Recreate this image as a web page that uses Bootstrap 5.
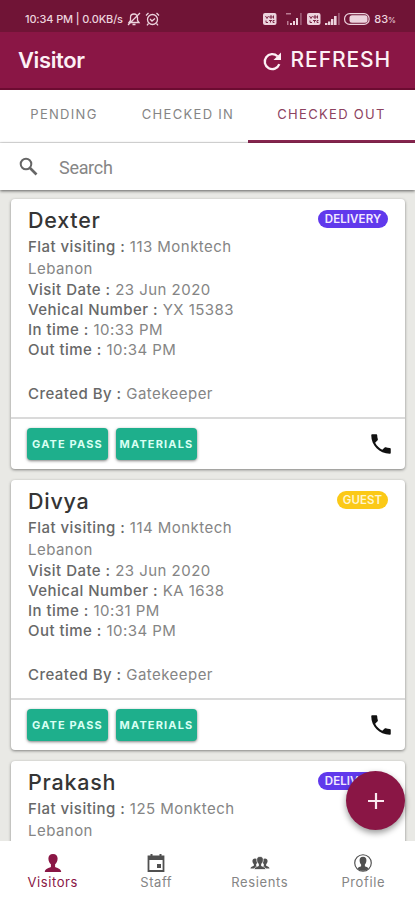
<!DOCTYPE html>
<html lang="en">
<head>
<meta charset="utf-8">
<meta name="viewport" content="width=device-width, initial-scale=1">
<title>Visitor</title>
<link href="https://cdn.jsdelivr.net/npm/bootstrap@5.3.0/dist/css/bootstrap.min.css" rel="stylesheet">
<style>
body{font-family:Inter,"Liberation Sans",sans-serif;background:#e9e9e5;color:#858585}
.app{height:900px;overflow:hidden}
.statusbar{height:32px;background:#701436;color:#ecd3dd;font-size:11px;padding:6px 15px 0 25px;font-weight:500}
.status-net{letter-spacing:-.15px}
.status-pct{font-size:8px}
.topbar{height:58px;background:#8a1645;border-bottom:2px solid #6c0b31;padding:0 24px 1px 18px;color:#fdf0f5}
.topbar h1{font-size:22px;font-weight:600;letter-spacing:-.4px;line-height:1}
.refresh{font-size:21px;font-weight:500;letter-spacing:.9px;line-height:1;color:#fdf0f5}
.refresh:hover{color:#fff}
.tabs{height:53px;background:#fff}
.tabs .nav-link{color:#858585;font-size:13px;letter-spacing:1.3px;border-radius:0;padding:0;line-height:49px;height:53px;border-bottom:1px solid #e6e6e6;white-space:nowrap}
.tabs .nav-link.active{color:#8d4260;border-bottom:3px solid #882650}
.t1{width:124px;padding-left:4px!important}.t2{width:128px}.t3{width:167px;flex-shrink:0}
.tabs .t2{margin-right:-4px}
.search{height:47px;background:#fff;padding-left:19px;box-shadow:0 1px 3px rgba(0,0,0,.6);color:#868686;font:18px Roboto,sans-serif;position:relative}
.search-label{margin-left:21px;letter-spacing:-.3px;padding-top:1px}
.feed{height:651px;overflow:hidden;padding:9px 10px 0 11px}
.visit{height:270px;margin-bottom:11px;border:0;border-radius:4px;box-shadow:0 1px 3px rgba(0,0,0,.45);flex-shrink:0}
.visit-main{height:218px;padding:7px 17px 0;font-size:15px;line-height:20px;letter-spacing:.46px}
.visit h2{font-size:21.5px;line-height:28px;font-weight:500;color:#353535;letter-spacing:.75px;margin:0 0 1px}
.visit strong{font-weight:500;color:#686868}
.flat{line-height:23px}
.flat + .flat{line-height:22px}
.created{margin-top:24px}
.tag{height:18px;border-radius:10px;font-size:11.5px;font-weight:600;line-height:19px;color:#f3eaff;background:#6039ec;margin-top:4px;text-align:center;width:70px;letter-spacing:.1px;white-space:nowrap}
.tag-guest{background:#fbc917;color:#fff6d0;width:51px}
.visit-foot{height:52px;border-top:2px solid #dadada;padding:0 11px 0 16px}
.act{width:81px;height:32px;background:#1eaf8c;color:#d9fff3;border:0;border-radius:4px;font-size:11px;font-weight:700;padding:0;line-height:31px;box-shadow:0 1px 3px rgba(0,0,0,.5);letter-spacing:1.15px;white-space:nowrap}
.act:hover{background:#179a7a;color:#fff}
.bottom{height:59px;background:#fff;font-size:13px;letter-spacing:.6px;line-height:16px;padding-left:1px}
.bottom a{color:#858585;text-decoration:none;padding-top:13px;width:25%}
.bottom a svg{color:#505050;margin-bottom:2px}
.bottom a.on,.bottom a.on svg{color:#8a1645}
.fab{position:absolute;left:346px;top:771px;width:59px;height:59px;border-radius:50%;border:0;background:#8a1645;box-shadow:0 3px 6px rgba(0,0,0,.4)}
</style>
</head>
<body>
<svg class="d-none">
<symbol id="phone" viewBox="0 0 24 24"><path d="M6.6 10.8c1.4 2.8 3.8 5.1 6.6 6.6l2.2-2.2c.3-.3.7-.4 1-.2 1.1.4 2.3.6 3.6.6.6 0 1 .4 1 1V20c0 .6-.4 1-1 1C10.600 21 3 13.400 3 4c0-.6.4-1 1-1h3.500c.6 0 1 .4 1 1 0 1.300.2 2.500.6 3.600.1.300 0 .7-.2 1z"/></symbol>
<symbol id="volte" viewBox="0 0 14 12"><rect width="13.500" height="12" rx="2" fill="#ecd3dd"/><path d="M2.500 3l1.500 2.500L5.500 3M7 3h2v2H7zM10.500 2.500v3M3 7.500v2h2M6 7.500h3M7.500 7.500v2M11.500 7.500H10v2h1.500" fill="none" stroke="#701436" stroke-width=".9"/></symbol>
<symbol id="bars" viewBox="0 0 15 12"><path d="M0 12v-2h2.400v2zM3 12V8.500h2.400V12zM6 12V6h2.400v6zM9 12V3h2.600v9z" fill="#ecd3dd"/><path d="M13 12V0h1.800v12z" fill="#9a5570"/></symbol>
<symbol id="person" viewBox="0 0 18 18"><path d="M9 0c-3 0-4.600 1.900-4.600 4.600 0 2.300 1 4.600 2.500 5.700v2.700C4.500 14.200 1 14.600 .8 18h16.400c-.2-3.400-3.700-3.800-6.100-5v-2.700c1.500-1.100 2.500-3.400 2.500-5.700C13.600 1.900 12 0 9 0z"/></symbol>
</svg>
<div class="app d-flex flex-column position-relative">
<div class="statusbar d-flex align-items-center">
  <span class="status-net">10:34 PM | 0.0KB/s</span>
  <svg class="ms-1" width="14" height="14" viewBox="0 0 14 14" fill="none" stroke="#ecd3dd" stroke-width="1.300"><path d="M2 10.500h10l-1.500-2V5.500C10.500 3.500 9 2 7 2S3.500 3.500 3.500 5.500v3zM5.500 12.500h3M1 13L13 1"/></svg>
  <svg class="ms-1" width="15" height="14" viewBox="0 0 15 14" fill="none" stroke="#ecd3dd" stroke-width="1.300"><circle cx="7.500" cy="7.500" r="5"/><path d="M5 7l2 2 3-2.500M1 3.500L3.500 1M14 3.500L11.500 1M3.500 11.500L2 13.300M11.500 11.500l1.500 1.800"/></svg>
  <div class="ms-auto d-flex align-items-center">
    <svg class="me-1" width="14" height="12"><use href="#volte"/></svg>
    <svg class="ms-1" width="18" height="14" viewBox="0 0 18 14"><path d="M1 1h5v1.500H1zM2 9h1.500v4H2z" fill="#ba7c93"/><path d="M5 13v-2h2v2zM8 13V9h2v4zM11 13V6h2v7z" fill="#ecd3dd"/><path d="M15 13V1h1.800v12z" fill="#9a5570"/></svg>
    <svg class="ms-1" width="14" height="12"><use href="#volte"/></svg>
    <svg class="ms-1" width="15" height="12"><use href="#bars"/></svg>
    <svg class="ms-1" width="26" height="12" viewBox="0 0 26 12"><rect x=".6" y=".6" width="24.500" height="10.800" rx="5" fill="none" stroke="#ecd3dd" stroke-width="1.200"/><rect x="5.500" y="2.300" width="18" height="7.400" rx="2.500" fill="#ecd3dd"/></svg>
    <span class="ms-1 me-1">83<span class="status-pct">%</span></span>
  </div>
</div>
<header class="topbar d-flex align-items-center justify-content-between">
  <h1 class="m-0">Visitor</h1>
  <button class="refresh btn border-0 p-0 d-flex align-items-center">
    <svg class="me-2 mt-1" width="21" height="21" viewBox="0 0 21 21"><path d="M17.300 13.200A7.500 7.500 0 1 1 15.500 5.300" fill="none" stroke="currentColor" stroke-width="2.300"/><path d="M19 1.500v7.500h-7.500z" fill="currentColor"/></svg>REFRESH</button>
</header>
<nav class="tabs nav flex-nowrap text-center">
  <a class="nav-link t1" href="#">PENDING</a><a class="nav-link t2" href="#">CHECKED IN</a><a class="nav-link t3 active" href="#">CHECKED OUT</a>
</nav>
<div class="search d-flex align-items-center">
  <svg width="19" height="19" viewBox="0 0 19 19" fill="none" stroke="#666"><circle cx="7" cy="7" r="5.300" stroke-width="2"/><path d="M11 11l6.500 6.500" stroke-width="2.600"/></svg>
  <span class="search-label">Search</span>
</div>
<main class="feed d-flex flex-column">
  <article class="visit card"><div class="visit-main">
    <div class="d-flex justify-content-between"><h2>Dexter</h2><span class="tag">DELIVERY</span></div>
    <div class="flat"><strong>Flat visiting :</strong> 113 Monktech</div><div class="flat">Lebanon</div>
    <div><strong>Visit Date :</strong> 23 Jun 2020</div>
    <div><strong>Vehical Number :</strong> YX 15383</div>
    <div><strong>In time :</strong> 10:33 PM</div>
    <div><strong>Out time :</strong> 10:34 PM</div>
    <div class="created"><strong>Created By :</strong> Gatekeeper</div>
  </div><div class="visit-foot d-flex align-items-center gap-2"><button class="act btn">GATE PASS</button><button class="act btn">MATERIALS</button><svg class="ms-auto" width="26" height="26" fill="#111"><use href="#phone"/></svg></div></article>
  <article class="visit card"><div class="visit-main">
    <div class="d-flex justify-content-between"><h2>Divya</h2><span class="tag tag-guest">GUEST</span></div>
    <div class="flat"><strong>Flat visiting :</strong> 114 Monktech</div><div class="flat">Lebanon</div>
    <div><strong>Visit Date :</strong> 23 Jun 2020</div>
    <div><strong>Vehical Number :</strong> KA 1638</div>
    <div><strong>In time :</strong> 10:31 PM</div>
    <div><strong>Out time :</strong> 10:34 PM</div>
    <div class="created"><strong>Created By :</strong> Gatekeeper</div>
  </div><div class="visit-foot d-flex align-items-center gap-2"><button class="act btn">GATE PASS</button><button class="act btn">MATERIALS</button><svg class="ms-auto" width="26" height="26" fill="#111"><use href="#phone"/></svg></div></article>
  <article class="visit card"><div class="visit-main">
    <div class="d-flex justify-content-between"><h2>Prakash</h2><span class="tag">DELIVERY</span></div>
    <div class="flat"><strong>Flat visiting :</strong> 125 Monktech</div><div class="flat">Lebanon</div>
  </div></article>
</main>
<nav class="bottom d-flex">
  <a class="on d-flex flex-column align-items-center" href="#"><svg width="18" height="18" fill="currentColor"><use href="#person"/></svg>Visitors</a>
  <a class="d-flex flex-column align-items-center" href="#"><svg width="18" height="18" viewBox="0 0 18 18"><path d="M1.500 2.500h15v14.500h-15z" fill="none" stroke="currentColor" stroke-width="1.800"/><path d="M1 2h16v4H1zM3.500 0h2v3h-2zM12.500 0h2v3h-2zM10 10h4v4h-4z" fill="currentColor"/></svg>Staff</a>
  <a class="d-flex flex-column align-items-center" href="#"><svg width="20" height="18" viewBox="0 0 20 18" fill="currentColor"><svg x="0" y="4" width="10" height="11"><use href="#person"/></svg><svg x="10" y="4" width="10" height="11"><use href="#person"/></svg><svg x="3.500" y="2" width="13" height="14" stroke="#fff" stroke-width="1"><use href="#person"/></svg></svg>Resients</a>
  <a class="d-flex flex-column align-items-center" href="#"><svg width="20" height="18" viewBox="0 0 20 20"><circle cx="10" cy="10" r="9.200" fill="none" stroke="currentColor" stroke-width="1.300"/><path d="M10 3C7.300 3 6.200 4.600 6.200 7c0 2 .7 3.900 1.700 4.800v1.700c-1.500.7-3.300 1-4 2.500 1.500 1.700 3.700 2.700 6.100 2.700s4.600-1 6.100-2.700c-.7-1.500-2.500-1.800-4-2.500v-1.700c1-.9 1.700-2.800 1.700-4.800C13.800 4.600 12.700 3 10 3z" fill="currentColor"/></svg>Profile</a>
</nav>
<button class="fab d-flex align-items-center justify-content-center p-0" aria-label="Add visitor"><svg width="16" height="16" viewBox="0 0 16 16"><path d="M8 0v16M0 8h16" stroke="#fbe9f0" stroke-width="2.200"/></svg></button>
</div>
<script src="https://cdn.jsdelivr.net/npm/bootstrap@5.3.0/dist/js/bootstrap.bundle.min.js"></script>
</body>
</html>
